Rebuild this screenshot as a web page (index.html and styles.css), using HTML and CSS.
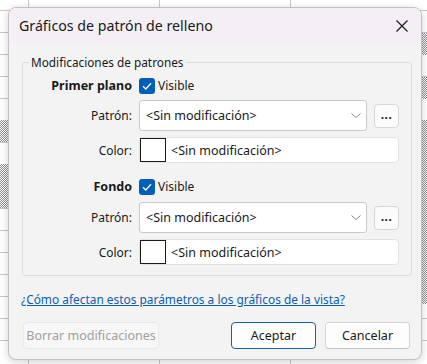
FILE: index.html
```html
<!DOCTYPE html>
<html lang="es">
<head>
<meta charset="utf-8">
<title>Gráficos de patrón de relleno</title>
<link rel="stylesheet" href="styles.css">
</head>
<body>
<div class="sheet">
  <div class="hatch hl1"></div>
  <div class="hatch hl2"></div>
  <div class="hatch hr1"></div>
  <div class="hatch hr2"></div>
  <div class="hatch hr3"></div>
</div>
<div class="dialog">
  <div class="titlebar">
    <span class="title">Gráficos de patrón de relleno</span>
    <svg class="close" width="12" height="12" viewBox="0 0 12 12"><path d="M0.5 0.5 L11.5 11.5 M11.5 0.5 L0.5 11.5" stroke="#1b1b1b" stroke-width="1.2" fill="none"/></svg>
  </div>
  <div class="content">
    <fieldset class="group">
      <legend>Modificaciones de patrones</legend>
      <div class="rows">
        <div class="row head">
          <span class="lbl bold">Primer plano</span>
          <span class="check"><span class="box"><svg width="16" height="16" viewBox="0 0 16 16"><path d="M4 8.3 L6.8 11 L12 5.2" stroke="#fff" stroke-width="1.3" fill="none"/></svg></span>Visible</span>
        </div>
        <div class="row sel">
          <span class="lbl">Patrón:</span>
          <span class="select">&lt;Sin modificación&gt;<svg class="chev" width="10" height="5" viewBox="0 0 10 5"><path d="M0.5 0.5 L5 4.5 L9.5 0.5" stroke="#8a8a8a" stroke-width="1" fill="none"/></svg></span>
          <span class="more">...</span>
        </div>
        <div class="row col">
          <span class="lbl">Color:</span>
          <span class="field"><span class="swatch"></span>&lt;Sin modificación&gt;</span>
        </div>
        <div class="row head second">
          <span class="lbl bold">Fondo</span>
          <span class="check"><span class="box"><svg width="16" height="16" viewBox="0 0 16 16"><path d="M4 8.3 L6.8 11 L12 5.2" stroke="#fff" stroke-width="1.3" fill="none"/></svg></span>Visible</span>
        </div>
        <div class="row sel">
          <span class="lbl">Patrón:</span>
          <span class="select">&lt;Sin modificación&gt;<svg class="chev" width="10" height="5" viewBox="0 0 10 5"><path d="M0.5 0.5 L5 4.5 L9.5 0.5" stroke="#8a8a8a" stroke-width="1" fill="none"/></svg></span>
          <span class="more">...</span>
        </div>
        <div class="row col">
          <span class="lbl">Color:</span>
          <span class="field"><span class="swatch"></span>&lt;Sin modificación&gt;</span>
        </div>
      </div>
    </fieldset>
    <a class="link" href="#">¿Cómo afectan estos parámetros a los gráficos de la vista?</a>
    <div class="buttons">
      <span class="btn disabled">Borrar modificaciones</span>
      <span class="spacer"></span>
      <span class="btn primary">Aceptar</span>
      <span class="btn">Cancelar</span>
    </div>
  </div>
</div>
</body>
</html>
```

FILE: styles.css
```css
* { box-sizing: border-box; }
html, body { margin: 0; padding: 0; }
body {
  width: 427px;
  height: 364px;
  overflow: hidden;
  position: relative;
  font-family: "Noto Sans", "Open Sans", sans-serif;
  font-size: 12px;
  color: #1a1a1a;
  background-color: #fff;
  background-image:
    linear-gradient(to right, transparent 28px, #c8c8c8 28px, #c8c8c8 29px, transparent 29px,
      transparent 159px, #c8c8c8 159px, #c8c8c8 160px, transparent 160px,
      transparent 290px, #c8c8c8 290px, #c8c8c8 291px, transparent 291px),
    repeating-linear-gradient(to bottom, transparent 0, transparent 21px, #c8c8c8 21px, #c8c8c8 22px);
  background-position: 0 0, 0 -11px;
}
.sheet { position: absolute; inset: 0; }
.hatch {
  position: absolute;
  background: repeating-conic-gradient(#8c8c8c 0 25%, #ffffff 0 50%) 0 0 / 2px 2px;
}
.hl1 { left: 0; width: 28px; top: 120px; height: 22px; }
.hl2 { left: 0; width: 28px; top: 164px; height: 44px; }
.hr1 { left: 421px; width: 8px; top: 33px; height: 22px; }
.hr2 { left: 421px; width: 8px; top: 77px; height: 22px; }
.hr3 { left: 421px; width: 8px; top: 120px; height: 184px; }

.dialog {
  position: absolute;
  left: 8px;
  top: 7px;
  width: 414px;
  height: 353px;
  background: #f3f3f3;
  border: 1px solid #c2c2c2;
  border-radius: 8px;
  overflow: hidden;
  box-shadow: 0 2px 8px rgba(0,0,0,0.18);
}
.titlebar {
  height: 35px;
  background: #f4eff4;
  display: flex;
  align-items: center;
  justify-content: space-between;
  padding: 0 13px 0 10px;
}
.title { font-size: 14.2px; color: #1a1a1a; }
.close { display: block; }

.content {
  padding: 11px 9px 0 13px;
  display: flex;
  flex-direction: column;
}
.group {
  margin: 0;
  padding: 7px 12px 10px 0;
  border: 1px solid #dcdcdc;
  border-radius: 3px;
  width: 390px;
  min-width: 0;
}
.group legend {
  margin-left: 6px;
  padding: 0 2px;
  line-height: 16px;
  font-size: 11.8px;
}
.rows { display: flex; flex-direction: column; }
.row {
  display: grid;
  grid-template-columns: 109px 228px 25px;
  column-gap: 7px;
  align-items: center;
}
.lbl { text-align: right; }
.bold { font-weight: 700; font-size: 12.5px; }
.head { height: 16px; }
.head.second { margin-top: 15px; }
.sel { height: 31px; margin-top: 7px; }
.head.second + .sel { margin-top: 8px; }
.col { height: 26px; margin-top: 6px; }
.check { display: flex; align-items: center; gap: 3px; grid-column: 2 / 4; }
.box {
  width: 16px; height: 16px;
  background: #005fb8;
  border-radius: 3px;
  display: block;
}
.box svg { display: block; }
.select {
  height: 31px;
  background: #fff;
  border: 1px solid #c9c9c9;
  border-radius: 3px;
  display: flex;
  align-items: center;
  justify-content: space-between;
  padding: 0 5px 0 6px;
  font-size: 12.5px;
}
.chev { display: block; margin-bottom: 1px; }
.more {
  height: 24px;
  background: #fbfbfb;
  border: 1px solid #d6d6d6;
  border-radius: 4px;
  display: flex;
  align-items: center;
  justify-content: center;
  font-weight: 700;
  letter-spacing: 0.5px;
  padding-bottom: 2px;
}
.field {
  grid-column: 2 / 4;
  height: 26px;
  background: #fff;
  border: 1px solid #e2e2e2;
  border-radius: 4px;
  display: flex;
  align-items: center;
  gap: 5px;
  padding-left: 0;
  font-size: 12.5px;
}
.swatch {
  width: 26px;
  height: 24px;
  border: 1px solid #1a1a1a;
  background: #fff;
  display: block;
}
.link {
  margin: 15px 0 0 -1px;
  line-height: 16px;
  color: #0b5ead;
  text-decoration: underline;
  font-size: 11.9px;
  align-self: flex-start;
}
.buttons {
  margin-top: 15px;
  display: flex;
  align-items: center;
  gap: 9px;
  padding-right: 2px;
}
.spacer { flex: 1; }
.btn {
  height: 27px;
  width: 85px;
  display: flex;
  align-items: center;
  justify-content: center;
  background: #fdfdfd;
  border: 1px solid #d5d5d5;
  border-bottom-color: #c4c4c4;
  border-radius: 4px;
  font-size: 12.5px;
}
.btn.primary { border: 1px solid #1d5e9e; }
.btn.disabled {
  width: 136px;
  margin-left: 1px;
  background: #f7f7f7;
  border: 1px solid #e8e8e8;
  color: #a0a0a0;
}
```
